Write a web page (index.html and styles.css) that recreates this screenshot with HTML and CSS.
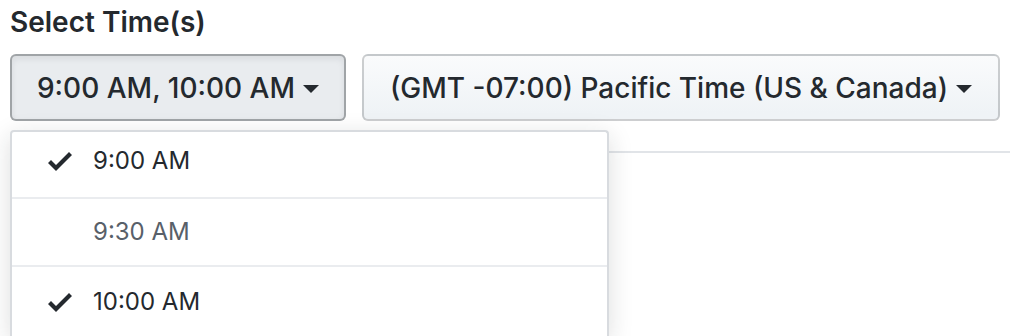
FILE: index.html
```html
<!DOCTYPE html>
<html lang="en">
<head>
  <meta charset="UTF-8">
  <meta name="viewport" content="width=device-width, initial-scale=1.0">
  <title>Select Time(s)</title>
  <link rel="stylesheet" href="styles.css">
</head>
<body>
  <h2 class="title">Select Time(s)</h2>
  <div class="controls">
    <div class="menu-wrap">
      <button class="btn btn-open">9:00 AM, 10:00 AM <span class="caret"></span></button>
      <div class="menu">
        <div class="menu-item selected">
          <svg class="check" viewBox="0 0 12 16" width="24" height="32"><path d="M12 5l-8 8-4-4 1.5-1.5L4 10l6.5-6.5L12 5z"/></svg>
          <span>9:00 AM</span>
        </div>
        <div class="menu-item">
          <svg class="check" viewBox="0 0 12 16" width="24" height="32"></svg>
          <span>9:30 AM</span>
        </div>
        <div class="menu-item selected">
          <svg class="check" viewBox="0 0 12 16" width="24" height="32"><path d="M12 5l-8 8-4-4 1.5-1.5L4 10l6.5-6.5L12 5z"/></svg>
          <span>10:00 AM</span>
        </div>
      </div>
    </div>
    <button class="btn btn-zone">(GMT -07:00) Pacific Time (US &amp; Canada) <span class="caret"></span></button>
  </div>
  <div class="divider"></div>
</body>
</html>
```

FILE: styles.css
```css
html {
  height: 100%;
}
body {
  margin: 0;
  min-height: 100%;
  box-sizing: border-box;
  padding: 4px 10px 0;
  background: #fff;
  color: #24292e;
  font-family: Inter, "Liberation Sans", Arial, sans-serif;
  overflow: hidden;
}
.title {
  margin: 0 0 14px;
  font-size: 28px;
  line-height: 36px;
  font-weight: 600;
}
.controls {
  display: flex;
  gap: 16px;
}
.menu-wrap {
  position: relative;
}
.btn {
  display: flex;
  align-items: center;
  justify-content: center;
  gap: 8px;
  height: 67px;
  border: 2px solid rgba(27, 31, 35, 0.2);
  border-radius: 6px;
  background-image: linear-gradient(-180deg, #fafbfc 0%, #eff3f6 90%);
  color: #24292e;
  font-family: inherit;
  font-size: 28px;
  font-weight: 500;
  padding: 0 20px;
  cursor: pointer;
}
.btn-open {
  width: 336px;
  background: #e9ecef;
  border-color: rgba(27, 31, 35, 0.35);
  box-shadow: inset 0 3px 6px rgba(27, 31, 35, 0.08);
}
.btn-zone {
  flex: 1;
}
.caret {
  width: 0;
  height: 0;
  border-top: 8px solid #24292e;
  border-left: 8px solid transparent;
  border-right: 8px solid transparent;
  margin-top: 3px;
}
.menu {
  position: absolute;
  top: 76px;
  left: 0;
  width: 599px;
  box-sizing: border-box;
  background: #fff;
  border: 2px solid #d8dbdf;
  border-bottom: none;
  border-radius: 4px 4px 0 0;
  box-shadow: 0 6px 24px rgba(27, 31, 35, 0.15);
  z-index: 2;
}
.menu-item {
  display: flex;
  align-items: center;
  height: 68px;
  box-sizing: border-box;
  padding: 0 0 0 36px;
  font-size: 24px;
  line-height: 30px;
  border-top: 2px solid #eaecef;
}
.menu-item:first-child {
  border-top: none;
  height: 65px;
  padding-bottom: 7px;
}
.menu-item:last-child {
  height: 71px;
}
.menu-item span {
  color: #586069;
}
.menu-item.selected span {
  color: #24292e;
}
.check {
  flex: none;
  margin-right: 21px;
  fill: #24292e;
}
.divider {
  height: 2px;
  margin: 30px -10px 0 0;
  background: #e1e4e8;
}
```
